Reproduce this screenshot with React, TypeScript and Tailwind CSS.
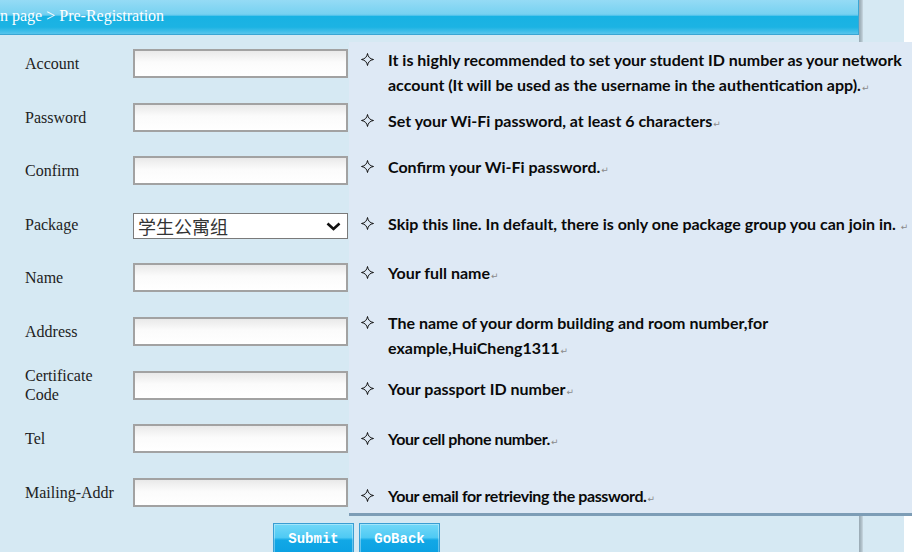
import React from 'react';

// form rows on the left
const fields: { label: React.ReactNode; kind?: 'select' }[] = [
  { label: 'Account' },
  { label: 'Password' },
  { label: 'Confirm' },
  { label: 'Package', kind: 'select' },
  { label: 'Name' },
  { label: 'Address' },
  { label: (<>Certificate<br />Code</>) },
  { label: 'Tel' },
  { label: 'Mailing-Addr' },
];

// hint blocks on the right (margin is the space above each block)
const hints: { gap: string; lines: string[]; tight?: boolean }[] = [
  {
    gap: 'mt-[5px]',
    lines: [
      'It is highly recommended to set your student ID number as your network',
      'account (It will be used as the username in the authentication app).',
    ],
  },
  { gap: 'mt-[11px]', lines: ['Set your Wi-Fi password, at least 6 characters'] },
  { gap: 'mt-[21px]', lines: ['Confirm your Wi-Fi password.'] },
  { gap: 'mt-[32px]', lines: ['Skip this line. In default, there is only one package group you can join in. '] },
  { gap: 'mt-[24px]', lines: ['Your full name'] },
  {
    gap: 'mt-[25px]',
    lines: ['The name of your dorm building and room number,for', 'example,HuiCheng1311'],
  },
  { gap: 'mt-[16px]', lines: ['Your passport ID number'] },
  { gap: 'mt-[25px]', lines: ['Your cell phone number.'], tight: true },
  { gap: 'mt-[32px]', lines: ['Your email for retrieving the password.'], tight: true },
];

const Star = () => (
  <svg width="13" height="13" viewBox="0 0 13 13">
    <path
      d="M6.5 0.5 Q7.3 5.7 12.5 6.5 Q7.3 7.3 6.5 12.5 Q5.7 7.3 0.5 6.5 Q5.7 5.7 6.5 0.5 Z"
      fill="none"
      stroke="#111"
      strokeWidth="1"
    />
  </svg>
);

const Divider = () => (
  <div className="w-[4px] shrink-0 bg-[linear-gradient(to_right,#98a9b3,#a9b9c2_50%,#c9d9e2)]" />
);

export default function App() {
  return (
    <div className="w-[912px] h-[552px] overflow-hidden bg-[#d6e9f3] flex flex-col">
      {/* HEADER */}
      <div className="flex h-[42px] shrink-0">
        <div className="w-[859px] shrink-0">
          <div className="h-[35px] border-b border-r border-[#3ba6d4] bg-[linear-gradient(to_bottom,#95dbf5_0%,#78d2f1_40%,#66caee_45%,#18b2e3_47%,#1cb3e3_80%,#58c5ec_100%)] pt-[6px] leading-[20px] text-[16px] text-white font-['Liberation_Serif',serif] whitespace-nowrap">
            n page &gt; Pre-Registration
          </div>
        </div>
        <Divider />
        <div className="w-[41px] shrink-0" />
        <div className="flex-1 bg-white" />
      </div>

      {/* BODY */}
      <div className="flex h-[474px] shrink-0">
        <div className="w-[349px] shrink-0 pt-[7px] font-['Liberation_Serif',serif] text-[16px] text-[#222]">
          {fields.map((f, i) => (
            <div key={i} className="flex items-start h-[53.6px]">
              <div className="w-[133px] shrink-0 pl-[25px] h-[29px] flex items-center leading-[19px]">
                <span>{f.label}</span>
              </div>
              {f.kind === 'select' ? (
                <div className="relative mt-[3px] w-[215px] h-[26px] border border-[#7a7a7a] bg-white">
                  <select className="appearance-none w-full h-full pl-[4px] bg-transparent outline-none text-[18px] leading-[24px] text-[#333] font-['Noto_Sans_CJK_SC',sans-serif]">
                    <option>学生公寓组</option>
                  </select>
                  <svg
                    className="absolute right-[6px] top-[8px] pointer-events-none"
                    width="15"
                    height="9"
                    viewBox="0 0 15 9">
                    <polyline points="1.5,1.5 7.5,7 13.5,1.5" fill="none" stroke="#111" strokeWidth="2.6" />
                  </svg>
                </div>
              ) : (
                <input
                  type="text"
                  className="w-[215px] h-[29px] border-2 border-[#a2a2a2] bg-[linear-gradient(to_bottom,#e9e9e9,#fbfbfb_45%,#ffffff)] outline-none"
                />
              )}
            </div>
          ))}
        </div>

        {/* HINT PANEL */}
        <div className="flex-1 min-w-0 overflow-hidden bg-[#dee9f5] border-b-[3px] border-[#7d9db6] font-['Lato',sans-serif] font-bold text-[16px] text-[#0a0a0a] whitespace-nowrap">
          {hints.map((h, i) => (
            <div key={i} className={`flex ${h.gap}`}>
              <div className="w-[39px] shrink-0 h-[25px] flex items-center pl-[12px]">
                <Star />
              </div>
              <div className={h.tight ? 'tracking-[-0.4px]' : ''}>
                {h.lines.map((l, j) => (
                  <div key={j} className="h-[25px] leading-[25px]">
                    {l}
                    {j === h.lines.length - 1 && (
                      <span className="ml-[1px] leading-none text-[9px] font-normal text-[#8a8a8a] font-['DejaVu_Sans',sans-serif]">↵</span>
                    )}
                  </div>
                ))}
              </div>
            </div>
          ))}
        </div>
      </div>

      {/* FOOTER */}
      <div className="flex flex-1">
        <div className="w-[859px] shrink-0 pl-[273px] pt-[7px] flex gap-[5px]">
          {['Submit', 'GoBack'].map((b) => (
            <button
              key={b}
              className="w-[81px] h-[34px] pb-[2px] border border-[#3a9ed3] bg-[linear-gradient(to_bottom,#72d8f8_0%,#4fcaf4_42%,#12a8e6_50%,#0aa0e2_100%)] text-white font-bold text-[14px] font-['Liberation_Mono',monospace] shadow-[inset_0_0_0_1px_rgba(255,255,255,0.35)]">
              {b}
            </button>
          ))}
        </div>
        <Divider />
        <div className="w-[41px] shrink-0" />
        <div className="flex-1 bg-white" />
      </div>
    </div>
  );
}
